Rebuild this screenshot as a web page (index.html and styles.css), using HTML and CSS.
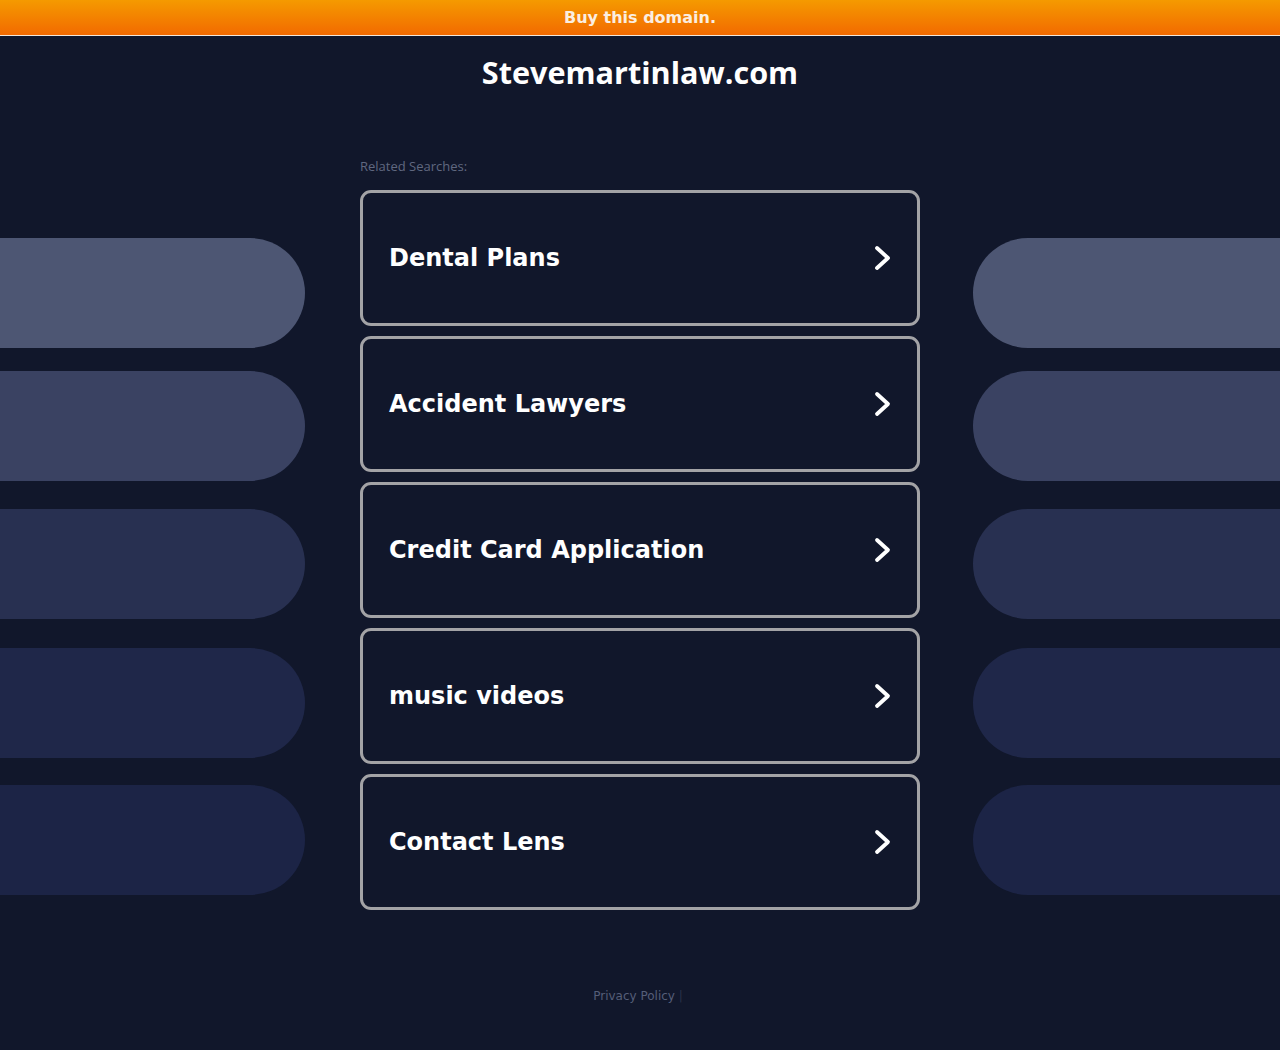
FILE: index.html
```html
<!DOCTYPE html>
<html>
<head>
<meta charset="utf-8">
<link rel="stylesheet" href="styles.css">
</head>
<body>
<div class="topbar"><a class="buy">Buy this domain.</a></div>
<h1 class="title">Stevemartinlaw.com</h1>
<div class="main">
  <div class="side side-left">
    <div class="pill p1"></div>
    <div class="pill p2"></div>
    <div class="pill p3"></div>
    <div class="pill p4"></div>
    <div class="pill p5"></div>
  </div>
  <div class="center">
    <div class="related">Related Searches:</div>
    <a class="card"><span class="label">Dental Plans</span><svg class="chev" viewBox="0 0 20 26"><polyline points="4,3 15,13 4,23"/></svg></a>
    <a class="card"><span class="label">Accident Lawyers</span><svg class="chev" viewBox="0 0 20 26"><polyline points="4,3 15,13 4,23"/></svg></a>
    <a class="card"><span class="label">Credit Card Application</span><svg class="chev" viewBox="0 0 20 26"><polyline points="4,3 15,13 4,23"/></svg></a>
    <a class="card"><span class="label">music videos</span><svg class="chev" viewBox="0 0 20 26"><polyline points="4,3 15,13 4,23"/></svg></a>
    <a class="card"><span class="label">Contact Lens</span><svg class="chev" viewBox="0 0 20 26"><polyline points="4,3 15,13 4,23"/></svg></a>
  </div>
  <div class="side side-right">
    <div class="pill p1"></div>
    <div class="pill p2"></div>
    <div class="pill p3"></div>
    <div class="pill p4"></div>
    <div class="pill p5"></div>
  </div>
</div>
<div class="footer"><span class="pp">Privacy Policy</span> <span class="sep">|</span></div>
</body>
</html>
```

FILE: styles.css
```css
html, body {
  margin: 0;
  padding: 0;
  background: #11172b;
  height: 100%;
}
body {
  font-family: "DejaVu Sans", sans-serif;
}
.topbar {
  height: 35px;
  background: linear-gradient(#f59a00, #f26a00);
  border-bottom: 1px solid #f2e6d8;
  display: flex;
  align-items: center;
  justify-content: center;
}
.buy {
  color: #fbeee0;
  font-weight: bold;
  font-size: 16px;
}
.title {
  margin: 0;
  padding-top: 16px;
  text-align: center;
  color: #ffffff;
  font-family: "Open Sans", sans-serif;
  font-weight: 700;
  font-size: 30.6px;
  line-height: 40px;
  height: 40px;
}
.main {
  display: flex;
  margin-top: 66px;
}
.side {
  width: 305px;
  padding-top: 80px;
  display: flex;
  flex-direction: column;
}
.side-right {
  flex: 1;
  margin-left: 53px;
}
.pill {
  height: 110px;
}
.side-left .pill {
  border-radius: 0 55px 55px 0;
}
.side-right .pill {
  border-radius: 55px 0 0 55px;
}
.p1 { background: #4d5673; }
.p2 { background: #3a4262; margin-top: 23px; }
.p3 { background: #283051; margin-top: 28px; }
.p4 { background: #1f2749; margin-top: 29px; }
.p5 { background: #1c2446; margin-top: 27px; }
.center {
  width: 560px;
  margin-left: 55px;
}
.related {
  font-family: "Open Sans", sans-serif;
  font-size: 13px;
  color: #606880;
  height: 22px;
  line-height: 16px;
  margin-bottom: 10px;
}
.card {
  box-sizing: border-box;
  height: 136px;
  border: 3px solid #a3a3a6;
  border-radius: 11px;
  margin-bottom: 10px;
  display: flex;
  align-items: center;
  justify-content: space-between;
  padding: 0 24px 0 26px;
  color: #ffffff;
}
.label {
  font-weight: bold;
  font-size: 24px;
}
.chev {
  width: 20px;
  height: 26px;
  fill: none;
  stroke: #ffffff;
  stroke-width: 3.8;
  stroke-linecap: round;
  stroke-linejoin: round;
}
.footer {
  text-align: center;
  margin-top: 69px;
  font-size: 12px;
  padding-right: 4px;
}
.pp { color: #555e78; }
.sep { color: #2a3149; }
```
